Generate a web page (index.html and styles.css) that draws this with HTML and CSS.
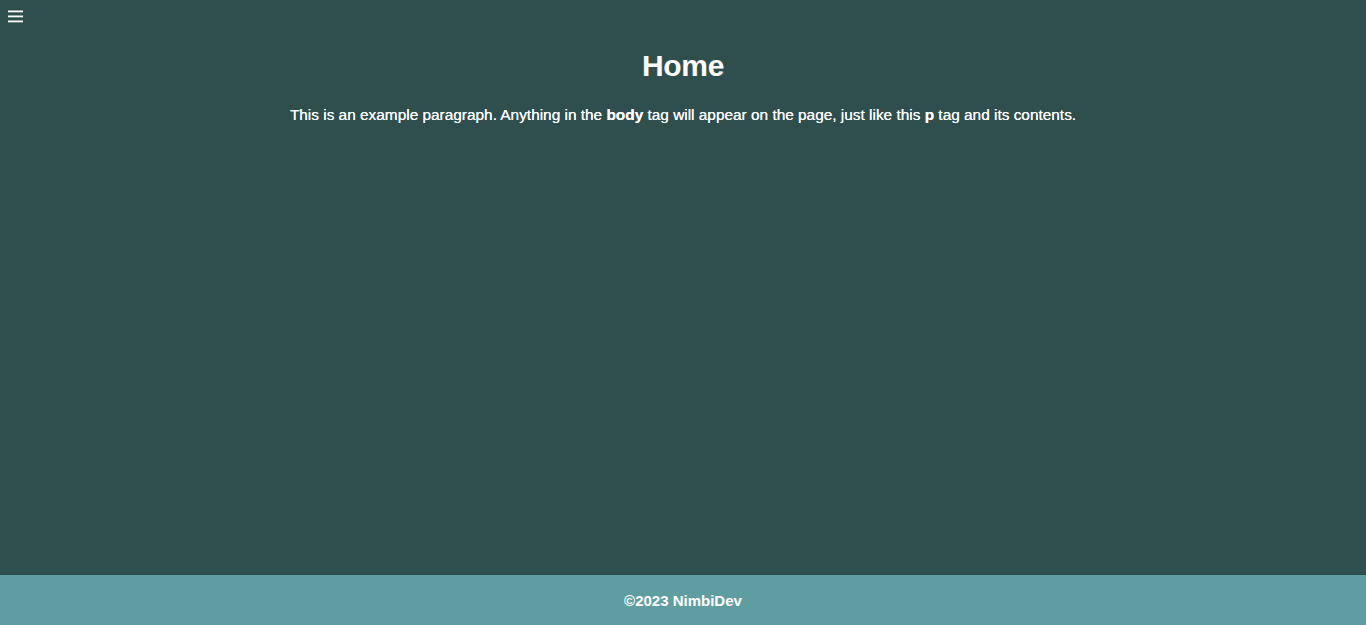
FILE: index.html
```html
<!DOCTYPE html>
<html>
<head>
<meta charset="utf-8">
<link rel="stylesheet" href="styles.css">
</head>
<body>
<div class="page">
  <header class="topbar">
    <button class="menu-btn" aria-label="Menu">
      <svg width="15" height="13" viewBox="0 0 15 13"><rect x="0" y="0.5" width="15" height="1.8" fill="#fff"/><rect x="0" y="5.5" width="15" height="1.8" fill="#fff"/><rect x="0" y="10.5" width="15" height="1.8" fill="#fff"/></svg>
    </button>
  </header>
  <main class="content">
    <h1 class="title">Home</h1>
    <p class="intro">This is an example paragraph. Anything in the <b>body</b> tag will appear on the page, just like this <b>p</b> tag and its contents.</p>
  </main>
  <footer class="footer">©2023 NimbiDev</footer>
</div>
</body>
</html>
```
FILE: styles.css
```css
html, body {
  margin: 0;
  padding: 0;
  height: 100%;
}
body {
  background: #2f4f4f;
  color: #fff;
  font-family: "Liberation Sans", Arial, sans-serif;
}
.page {
  display: flex;
  flex-direction: column;
  min-height: 100vh;
}
.topbar {
  height: 30px;
  padding: 10px 0 0 8px;
  box-sizing: border-box;
}
.menu-btn {
  background: none;
  border: 0;
  padding: 0;
  display: block;
  cursor: pointer;
}
.menu-btn svg { display: block; }
.content {
  flex: 1;
  text-align: center;
}
.title {
  margin: 18px 0 0;
  font-size: 30px;
  line-height: 36px;
  font-weight: bold;
  letter-spacing: -0.3px;
}
.intro {
  margin: 22px 0 0;
  font-size: 15.4px;
  line-height: 18px;
  text-shadow: 0 0 0.4px #fff;
}
.footer {
  height: 50px;
  background: #5f9ea0;
  display: flex;
  align-items: center;
  justify-content: center;
  font-size: 15px;
  font-weight: bold;
}
```
